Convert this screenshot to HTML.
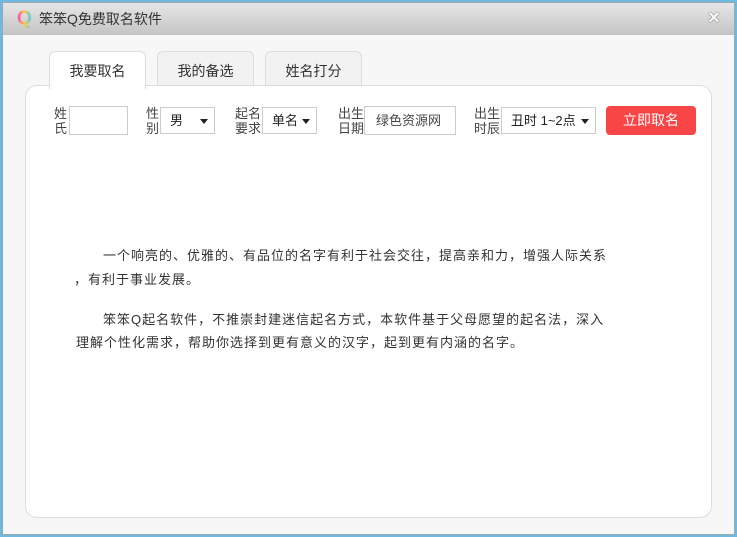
<!DOCTYPE html><html><head><meta charset="utf-8"><style>
*{margin:0;padding:0;box-sizing:border-box}
body{width:737px;height:537px;background:#6fb8e0;font-family:"Liberation Sans","Noto Sans CJK SC",sans-serif;color:#333;position:relative;overflow:hidden}
.win{position:absolute;left:2px;top:2px;width:733px;height:533px;background:#f7f7f7;border:1px solid #9aa}
.title{position:absolute;left:0;top:0;right:0;height:32px;background:linear-gradient(#e6e6e6,#c4c4c4)}
.a{position:absolute}
.tab{position:absolute;top:48px;height:37px;border:1px solid #ddd;border-bottom:none;border-radius:6px 6px 0 0;background:#f2f2f2;font-size:14px;text-align:center;line-height:38px;color:#333}
.panel{position:absolute;left:22px;top:82px;width:687px;height:433px;background:#fff;border:1px solid #ddd;border-radius:12px}
.lbl{position:absolute;font-size:13px;line-height:15px;color:#444}
.box{position:absolute;border:1px solid #ccc;background:#fff;font-size:13px;line-height:26px;padding-left:9px;color:#222}
.box .tri{position:absolute;right:6px;top:11px;border:4px solid transparent;border-top:5px solid #222;border-bottom:none}
.p{position:absolute;font-size:13px;white-space:nowrap;color:#333;letter-spacing:1px}
</style></head><body>
<div class="win">
<div class="title">
<div class="a" style="left:14px;top:5px;font-size:19px;font-weight:bold;background:linear-gradient(90deg,#f3c,#fc3,#3cf);-webkit-background-clip:text;color:transparent;line-height:22px">Q</div>
<div class="a" style="left:36px;top:7px;font-size:14px;color:#333;line-height:18px">笨笨Q免费取名软件</div>
<div class="a" style="left:705px;top:4px;font-size:20px;color:#fff;font-weight:bold;line-height:22px;text-shadow:0 0 1px #555,0 0 1px #555">×</div>
</div>
<div class="tab" style="left:46px;width:97px;background:#fff;z-index:2;height:38px">我要取名</div>
<div class="tab" style="left:154px;width:97px">我的备选</div>
<div class="tab" style="left:262px;width:97px">姓名打分</div>
<div class="panel"></div>
</div>
<div class="lbl" style="left:54px;top:106px">姓<br>氏</div>
<div class="box" style="left:69px;top:106px;width:59px;height:29px"></div>
<div class="lbl" style="left:146px;top:106px">性<br>别</div>
<div class="box" style="left:160px;top:107px;width:55px;height:27px">男<span class="tri"></span></div>
<div class="lbl" style="left:235px;top:106px">起名<br>要求</div>
<div class="box" style="left:262px;top:107px;width:55px;height:27px">单名<span class="tri"></span></div>
<div class="lbl" style="left:338px;top:106px">出生<br>日期</div>
<div class="box" style="left:364px;top:106px;width:92px;height:29px;line-height:28px;padding-left:11px;color:#444">绿色资源网</div>
<div class="lbl" style="left:474px;top:106px">出生<br>时辰</div>
<div class="box" style="left:501px;top:107px;width:95px;height:27px">丑时 1~2点<span class="tri"></span></div>
<div class="a" style="left:606px;top:106px;width:90px;height:29px;background:#f84646;border-radius:4px;color:#fff;font-size:14px;text-align:center;line-height:29px">立即取名</div>
<div class="p" style="left:103px;top:245px">一个响亮的、优雅的、有品位的名字有利于社会交往，提高亲和力，增强人际关系</div>
<div class="p" style="left:74px;top:269px">，有利于事业发展。</div>
<div class="p" style="left:103px;top:309px">笨笨Q起名软件，不推崇封建迷信起名方式，本软件基于父母愿望的起名法，深入</div>
<div class="p" style="left:76px;top:332px">理解个性化需求，帮助你选择到更有意义的汉字，起到更有内涵的名字。</div>
</body></html>
